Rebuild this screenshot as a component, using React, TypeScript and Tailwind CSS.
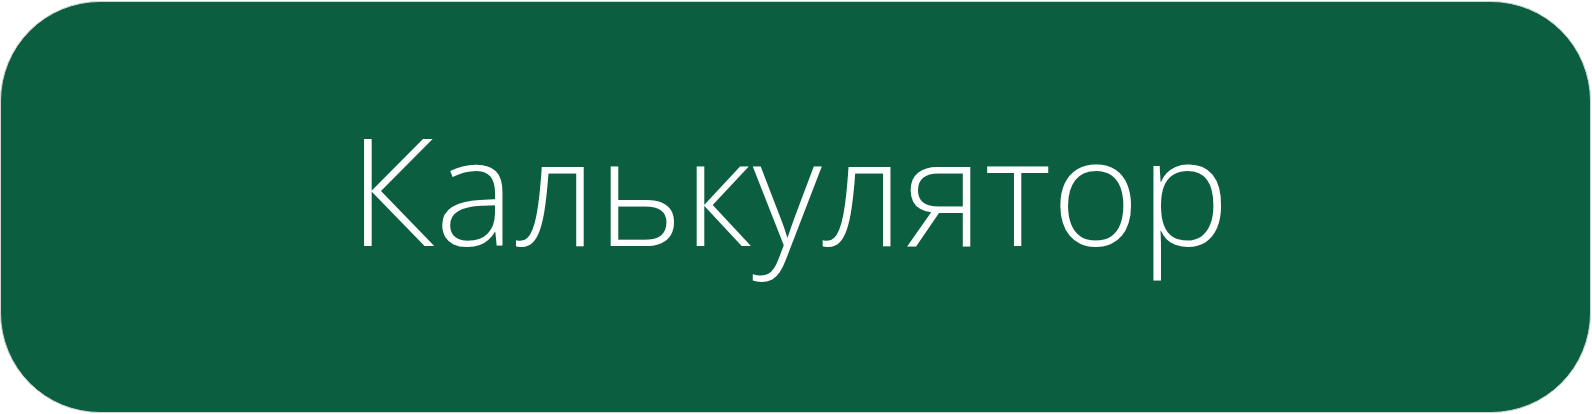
export default function App() {
  return (
    <div className="w-[1592px] pt-px bg-white">
      <div className="w-[1591px] h-[412px] rounded-[100px] bg-[#0b5e3f] border border-[#cfd6d2] flex items-center justify-center pb-[38px] pr-[12px] text-white">
        <span className="font-['Open_Sans',sans-serif] font-[350] text-[150px] leading-none tracking-[0.5px]">
          Калькулятор
        </span>
      </div>
    </div>
  );
}
